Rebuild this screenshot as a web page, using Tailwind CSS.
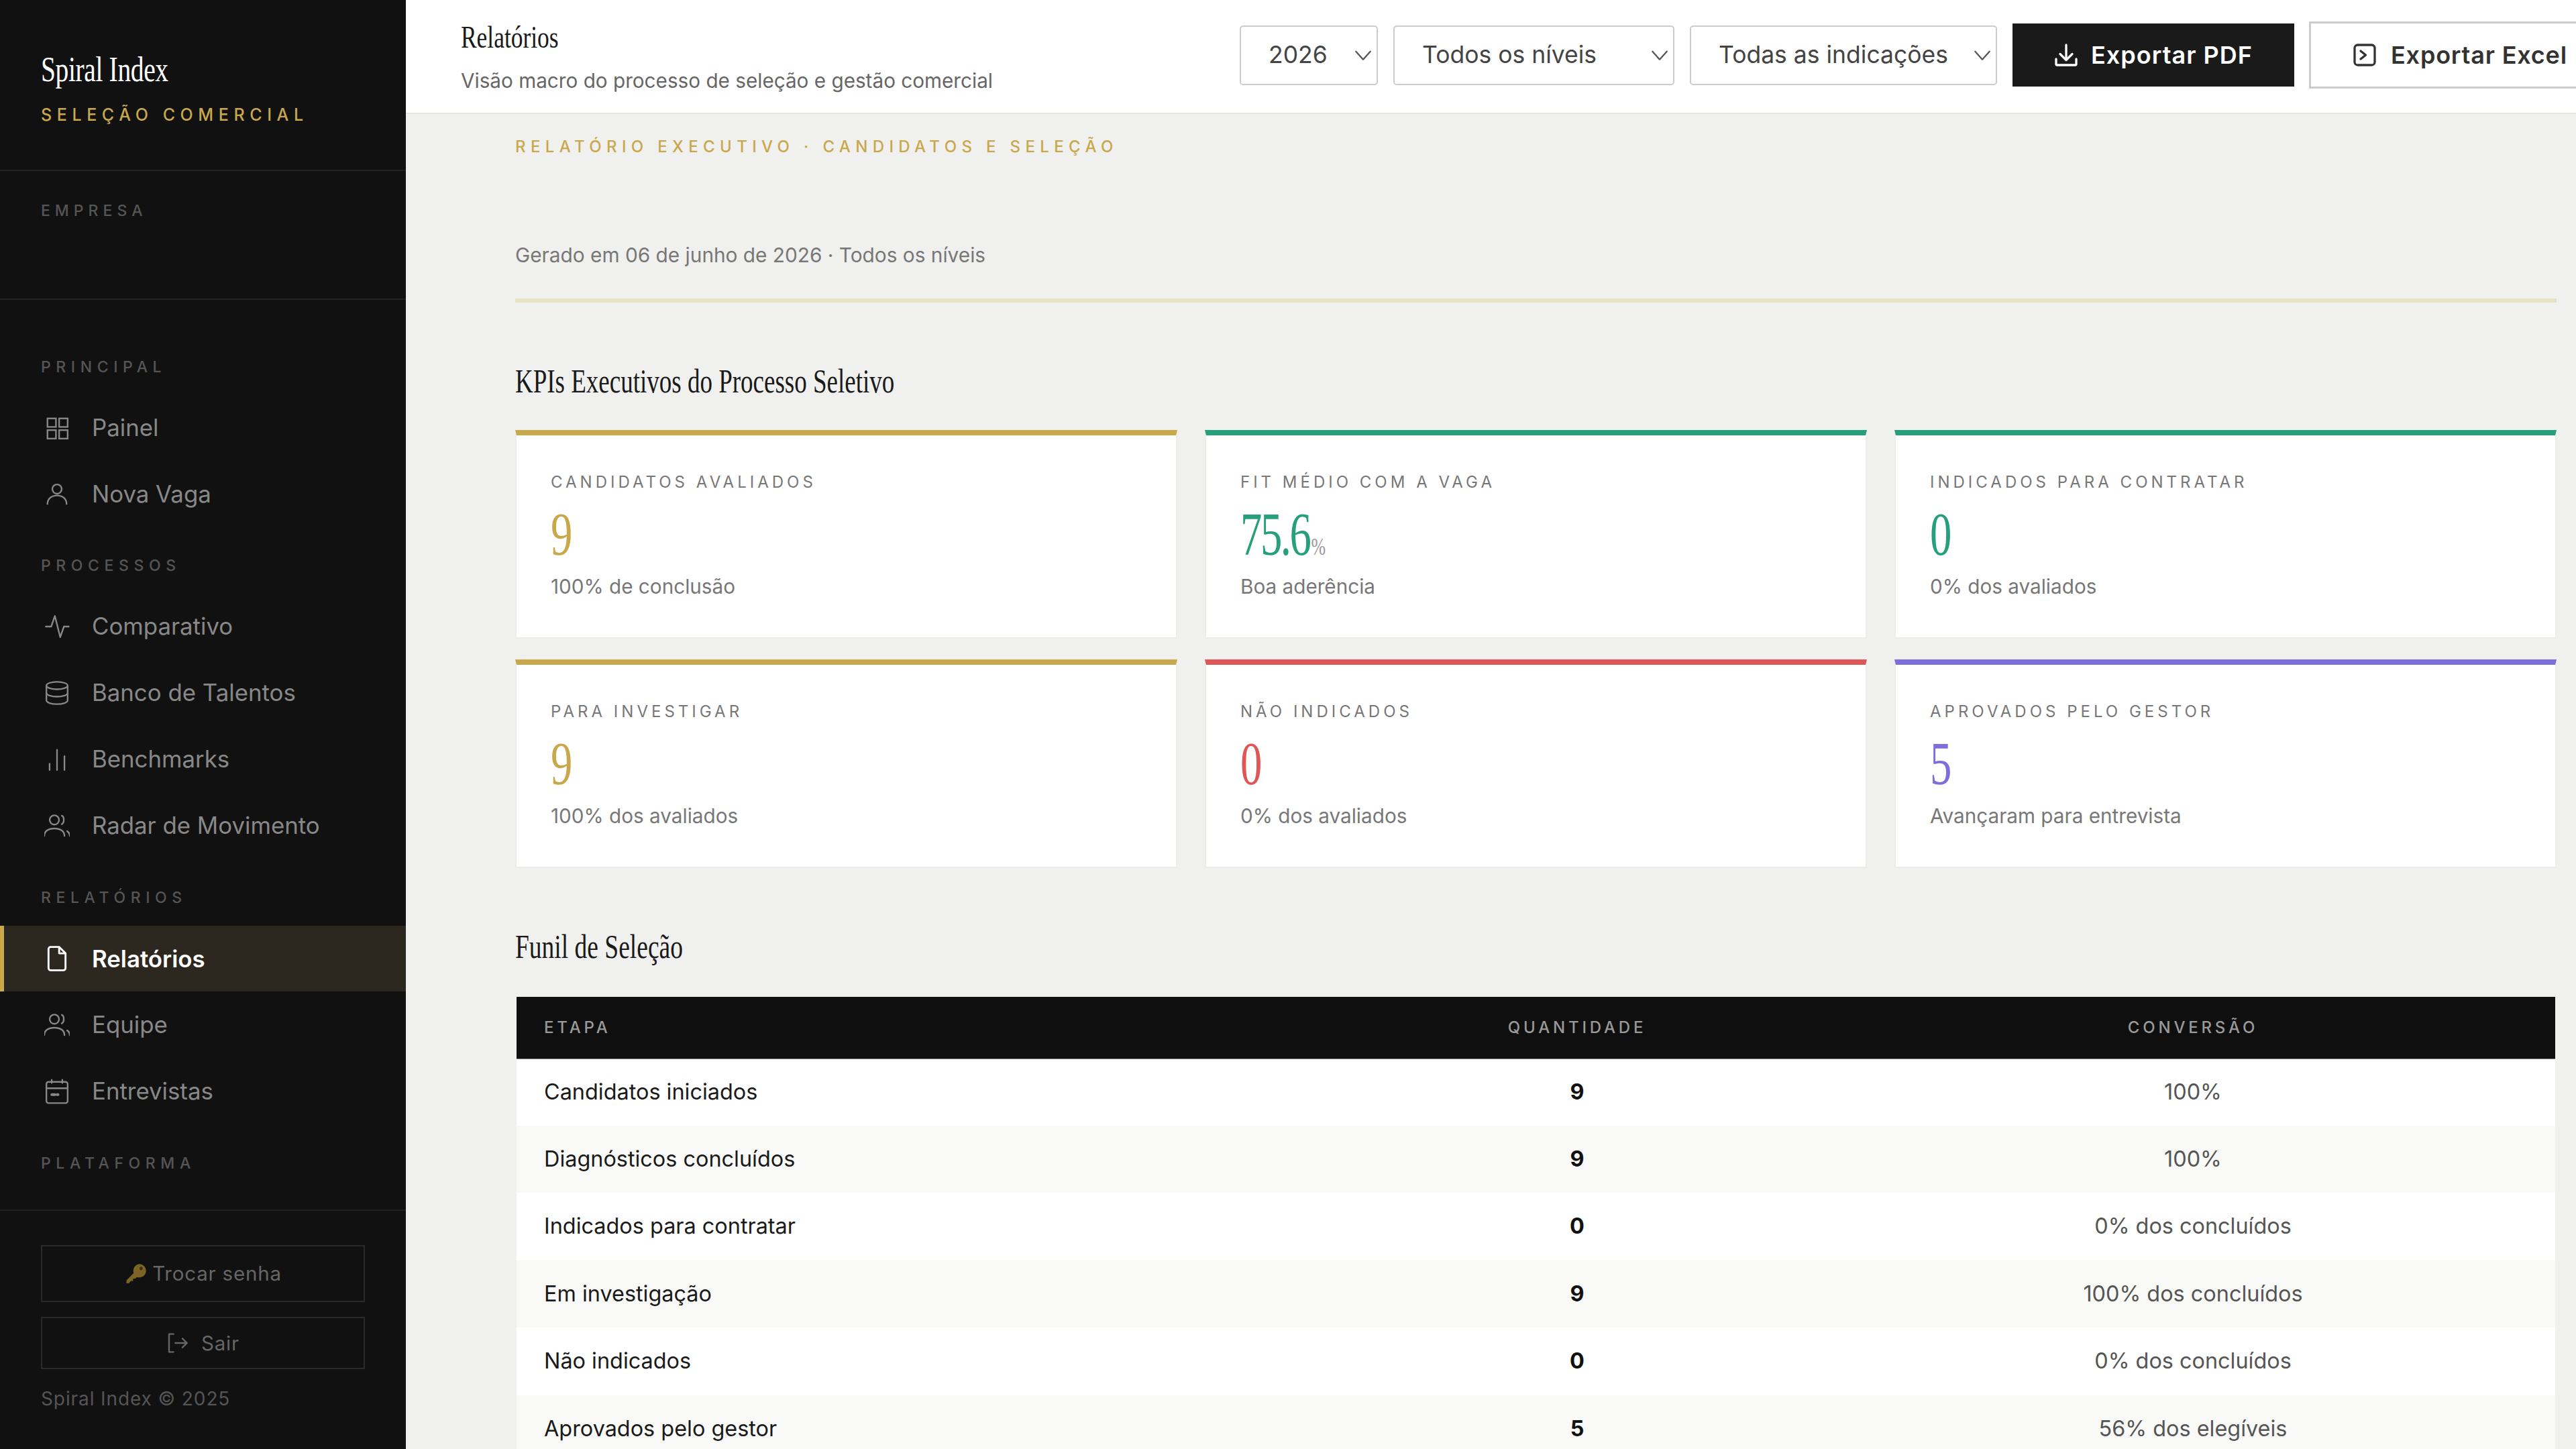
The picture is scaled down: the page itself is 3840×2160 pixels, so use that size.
<!DOCTYPE html>
<html lang="pt-BR">
<head>
<meta charset="UTF-8">
<title>Spiral Index - Relatórios</title>
<script src="https://cdn.jsdelivr.net/npm/@tailwindcss/browser@4"></script>
</head>
<body class="h-[2160px] w-[3840px] overflow-hidden bg-[#f0f0ee] font-['Inter','Liberation_Sans',sans-serif]">
<div class="flex h-full w-full">

  <!-- Sidebar -->
  <aside class="flex h-full w-[605px] shrink-0 flex-col bg-[#111111]">
    <div class="h-[255px] border-b-2 border-[#222222] pl-[61px] pt-[74px]">
      <div class="origin-left scale-x-[.76] whitespace-nowrap font-['Liberation_Serif',serif] text-[52px] leading-[60px] tracking-[-0.5px] text-white">Spiral Index</div>
      <div class="mt-[22px] whitespace-nowrap text-[25px] font-medium leading-[30px] tracking-[7.600px] text-[#c9a84c]">SELEÇÃO COMERCIAL</div>
    </div>
    <div class="h-[192px] border-b-2 border-[#222222] pl-[61px] pt-[44px] text-[23px] font-medium leading-[30px] tracking-[7px] text-[#555555]">EMPRESA</div>

    <nav class="flex-1 pt-[85px]">
      <div class="pl-[61px] text-[23px] font-medium leading-[30px] tracking-[7.600px] text-[#555555]">PRINCIPAL</div>
      <a class="mt-[26px] flex h-[99px] items-center gap-[33px] pl-[66px] text-[34.800px] text-[#888888]">
        <svg class="h-[38px] w-[38px]" viewBox="0 0 24 24" fill="none" stroke="currentColor" stroke-width="1.5"><rect x="3" y="3" width="8" height="8"/><rect x="14" y="3" width="8" height="8"/><rect x="3" y="14" width="8" height="8"/><rect x="14" y="14" width="8" height="8"/></svg>
        Painel
      </a>
      <a class="flex h-[99px] items-center gap-[33px] pl-[66px] text-[34.800px] text-[#888888]">
        <svg class="h-[38px] w-[38px]" viewBox="0 0 24 24" fill="none" stroke="currentColor" stroke-width="1.5" stroke-linecap="round"><circle cx="12" cy="7" r="4.400"/><path d="M3 21c0-5 4-8 9-8s9 3 9 8"/></svg>
        Nova Vaga
      </a>
      <div class="mt-[42px] pl-[61px] text-[23px] font-medium leading-[30px] tracking-[7.600px] text-[#555555]">PROCESSOS</div>
      <a class="mt-[26px] flex h-[99px] items-center gap-[33px] pl-[66px] text-[34.800px] text-[#888888]">
        <svg class="h-[38px] w-[38px]" viewBox="0 0 24 24" fill="none" stroke="currentColor" stroke-width="1.5" stroke-linecap="round" stroke-linejoin="round"><path d="M1.5 12h5l3.500-10 5 20 3.500-10h4.500"/></svg>
        Comparativo
      </a>
      <a class="flex h-[99px] items-center gap-[33px] pl-[66px] text-[34.800px] text-[#888888]">
        <svg class="h-[38px] w-[38px]" viewBox="0 0 24 24" fill="none" stroke="currentColor" stroke-width="1.5"><ellipse cx="12" cy="5" rx="10" ry="3.500"/><path d="M2 5v14c0 2 4.500 3.500 10 3.500s10-1.500 10-3.500V5"/><path d="M2 12c0 2 4.500 3.500 10 3.500s10-1.500 10-3.500"/></svg>
        Banco de Talentos
      </a>
      <a class="flex h-[99px] items-center gap-[33px] pl-[66px] text-[34.800px] text-[#888888]">
        <svg class="h-[38px] w-[38px]" viewBox="0 0 24 24" fill="none" stroke="currentColor" stroke-width="1.5" stroke-linecap="round"><path d="M5 22v-6M12 22V3M19 22V9"/></svg>
        Benchmarks
      </a>
      <a class="flex h-[99px] items-center gap-[33px] pl-[66px] text-[34.800px] text-[#888888]">
        <svg class="h-[38px] w-[38px]" viewBox="0 0 24 24" fill="none" stroke="currentColor" stroke-width="1.5" stroke-linecap="round"><circle cx="9.500" cy="6.500" r="4.400"/><path d="M0 21.500c0-4.500 4-7 9.500-7s9.500 2.500 9.500 7"/><path d="M16.500 2.500c2.500 1 2.500 6.500 0 8M21.500 17c1.500 1 2.500 2.500 2.500 4.500"/></svg>
        Radar de Movimento
      </a>
      <div class="mt-[43px] pl-[61px] text-[23px] font-medium leading-[30px] tracking-[7.600px] text-[#555555]">RELATÓRIOS</div>
      <a class="mt-[27px] flex h-[98px] items-center gap-[33px] border-l-[6px] border-[#c9a84c] bg-[#2c2820] pl-[60px] text-[34.800px] font-semibold text-white">
        <svg class="h-[38px] w-[38px]" viewBox="0 0 24 24" fill="none" stroke="currentColor" stroke-width="1.8" stroke-linejoin="round"><path d="M4 3a2 2 0 0 1 2-2h8l6 6v14a2 2 0 0 1-2 2H6a2 2 0 0 1-2-2z"/><path d="M14 1v6h6"/></svg>
        Relatórios
      </a>
      <a class="flex h-[99px] items-center gap-[33px] pl-[66px] text-[34.800px] text-[#888888]">
        <svg class="h-[38px] w-[38px]" viewBox="0 0 24 24" fill="none" stroke="currentColor" stroke-width="1.5" stroke-linecap="round"><circle cx="9.500" cy="6.500" r="4.400"/><path d="M0 21.500c0-4.500 4-7 9.500-7s9.500 2.500 9.500 7"/><path d="M16.500 2.500c2.500 1 2.500 6.500 0 8M21.500 17c1.500 1 2.500 2.500 2.500 4.500"/></svg>
        Equipe
      </a>
      <a class="flex h-[99px] items-center gap-[33px] pl-[66px] text-[34.800px] text-[#888888]">
        <svg class="h-[38px] w-[38px]" viewBox="0 0 24 24" fill="none" stroke="currentColor" stroke-width="1.5" stroke-linecap="round"><rect x="2" y="3" width="20" height="20" rx="2"/><path d="M2 9h20M7 1v3M17 1v3"/><path d="M7 15h3M12 15h1" stroke-width="2.400"/></svg>
        Entrevistas
      </a>
      <div class="mt-[43px] pl-[61px] text-[23px] font-medium leading-[30px] tracking-[7.600px] text-[#555555]">PLATAFORMA</div>
    </nav>

    <div class="h-[357px] border-t-2 border-[#222222] px-[61px] pt-[51px]">
      <button class="flex h-[85px] w-full items-center justify-center gap-[8px] border-2 border-[#2a2a2a] pl-[2px] text-[29.500px] tracking-[0.800px] text-[#666666]">
        <svg class="h-[32px] w-[32px]" viewBox="0 0 24 24" fill="#7c6425"><path d="M15.500 1a7.500 7.500 0 1 1-2.700 14.500L11 17.300h-2.500v2.500H6L3.800 22.500 1 22.500l.2-3.300 8-8.200A7.500 7.500 0 0 1 15.500 1z"/><circle cx="17.500" cy="6" r="1.800" fill="#3a3010"/></svg>
        Trocar senha
      </button>
      <button class="mt-[22px] flex h-[78px] w-full items-center justify-center gap-[20px] border-2 border-[#2a2a2a] text-[29.500px] tracking-[0.800px] text-[#666666]">
        <svg class="h-[32px] w-[32px]" viewBox="0 0 24 24" fill="none" stroke="currentColor" stroke-width="1.800" stroke-linecap="round" stroke-linejoin="round"><path d="M8 2H3v20h5"/><path d="M10 12h13M18 7l5 5-5 5"/></svg>
        Sair
      </button>
      <div class="mt-[28px] text-[28px] leading-[32px] tracking-[0.900px] text-[#555555]">Spiral Index © 2025</div>
    </div>
  </aside>

  <div class="flex min-w-0 flex-1 flex-col">
    <!-- Header -->
    <header class="flex h-[170px] shrink-0 items-center border-b-2 border-[#e5e5e3] bg-white pl-[82px]">
      <div class="w-[1161px] shrink-0">
        <div class="origin-left scale-x-[.77] whitespace-nowrap font-['Liberation_Serif',serif] text-[46px] leading-[54px] text-[#1a1a1a]">Relatórios</div>
        <div class="mt-[17px] whitespace-nowrap text-[29.700px] leading-[40px] text-[#666666]">Visão macro do processo de seleção e gestão comercial</div>
      </div>
      <div class="mb-[4px] flex w-max shrink-0 items-center">
        <div class="relative flex h-[89px] w-[206px] items-center rounded-[5px] border-2 border-[#cccccc] pl-[41px] text-[35.500px] text-[#444444]">2026
          <svg class="absolute right-[4px] top-[26px] h-[32px] w-[32px]" viewBox="0 0 24 24" fill="none" stroke="#555555" stroke-width="1.700" stroke-linecap="round" stroke-linejoin="round"><path d="M4 8l8 9 8-9"/></svg>
        </div>
        <div class="relative ml-[23px] flex h-[89px] w-[419px] items-center rounded-[5px] border-2 border-[#cccccc] pl-[41px] text-[35.500px] text-[#444444]">Todos os níveis
          <svg class="absolute right-[4px] top-[26px] h-[32px] w-[32px]" viewBox="0 0 24 24" fill="none" stroke="#555555" stroke-width="1.700" stroke-linecap="round" stroke-linejoin="round"><path d="M4 8l8 9 8-9"/></svg>
        </div>
        <div class="relative ml-[23px] flex h-[89px] w-[458px] items-center rounded-[5px] border-2 border-[#cccccc] pl-[41px] text-[35.500px] text-[#444444]">Todas as indicações
          <svg class="absolute right-[4px] top-[26px] h-[32px] w-[32px]" viewBox="0 0 24 24" fill="none" stroke="#555555" stroke-width="1.700" stroke-linecap="round" stroke-linejoin="round"><path d="M4 8l8 9 8-9"/></svg>
        </div>
        <button class="ml-[23px] flex h-[94px] w-[420px] items-center justify-center gap-[19px] bg-[#1a1a1a] text-[36px] font-semibold tracking-[1px] text-white">
          <svg class="h-[36px] w-[36px]" viewBox="0 0 24 24" fill="none" stroke="currentColor" stroke-width="2.200" stroke-linecap="round" stroke-linejoin="round"><path d="M12 2v14M6 11l6 6 6-6"/><path d="M2 16v5a1 1 0 0 0 1 1h18a1 1 0 0 0 1-1v-5"/></svg>
          Exportar PDF
        </button>
        <button class="ml-[22px] flex h-[100px] w-[420px] items-center gap-[21px] border-[3px] border-[#cccccc] bg-white pl-[62px] text-[36px] font-semibold tracking-[0.800px] text-[#333333]">
          <svg class="h-[36px] w-[36px]" viewBox="0 0 24 24" fill="none" stroke="currentColor" stroke-width="2.200" stroke-linecap="round" stroke-linejoin="round"><rect x="2" y="2" width="20" height="20" rx="3"/><path d="M8 8l5 4-5 4"/></svg>
          Exportar Excel
        </button>
      </div>
    </header>

    <!-- Report -->
    <main class="min-h-0 flex-1 overflow-hidden pl-[163px] pr-[29px]">
      <div class="mt-[33px] whitespace-nowrap text-[24px] font-medium leading-[32px] tracking-[7.350px] text-[#c9a84c]">RELATÓRIO EXECUTIVO · CANDIDATOS E SELEÇÃO</div>
      <div class="mt-[125px] text-[29.800px] leading-[40px] text-[#777777]">Gerado em 06 de junho de 2026 · Todos os níveis</div>
      <div class="mt-[45px] h-[6px] bg-[#e8e0c4]"></div>

      <h2 class="mt-[88px] origin-left scale-x-[.74] whitespace-nowrap font-['Liberation_Serif',serif] text-[50px] font-normal leading-[58px] text-[#1a1a1a]">KPIs Executivos do Processo Seletivo</h2>

      <div class="mt-[44px] grid grid-cols-3 gap-x-[41px] gap-y-[31px]">
        <div class="h-[311px] border-x-[2px] border-b-[2px] border-t-[8px] border-x-[#ecece9] border-b-[#ecece9] border-t-[#c9a84c] bg-white pl-[51px] pt-[55px]">
          <div class="text-[24px] leading-[30px] tracking-[5px] text-[#777777]">CANDIDATOS AVALIADOS</div>
          <div class="mt-[22px] h-[82px] origin-left scale-x-[.72] font-['Liberation_Serif',serif] text-[90px] leading-[82px] text-[#c9a84c]">9</div>
          <div class="mt-[16px] text-[29.700px] leading-[40px] text-[#777777]">100% de conclusão</div>
        </div>
        <div class="h-[311px] border-x-[2px] border-b-[2px] border-t-[8px] border-x-[#ecece9] border-b-[#ecece9] border-t-[#25a07a] bg-white pl-[51px] pt-[55px]">
          <div class="text-[24px] leading-[30px] tracking-[5px] text-[#777777]">FIT MÉDIO COM A VAGA</div>
          <div class="mt-[22px] h-[82px] origin-left scale-x-[.72] whitespace-nowrap font-['Liberation_Serif',serif] text-[90px] leading-[82px] tracking-[-3.500px] text-[#25a07a]">75.6<span class="ml-[3px] text-[36px] tracking-normal text-[#999999]">%</span></div>
          <div class="mt-[16px] text-[29.700px] leading-[40px] text-[#777777]">Boa aderência</div>
        </div>
        <div class="h-[311px] border-x-[2px] border-b-[2px] border-t-[8px] border-x-[#ecece9] border-b-[#ecece9] border-t-[#25a07a] bg-white pl-[51px] pt-[55px]">
          <div class="text-[24px] leading-[30px] tracking-[5px] text-[#777777]">INDICADOS PARA CONTRATAR</div>
          <div class="mt-[22px] h-[82px] origin-left scale-x-[.72] font-['Liberation_Serif',serif] text-[90px] leading-[82px] text-[#25a07a]">0</div>
          <div class="mt-[16px] text-[29.700px] leading-[40px] text-[#777777]">0% dos avaliados</div>
        </div>
        <div class="h-[311px] border-x-[2px] border-b-[2px] border-t-[8px] border-x-[#ecece9] border-b-[#ecece9] border-t-[#c9a84c] bg-white pl-[51px] pt-[55px]">
          <div class="text-[24px] leading-[30px] tracking-[5px] text-[#777777]">PARA INVESTIGAR</div>
          <div class="mt-[22px] h-[82px] origin-left scale-x-[.72] font-['Liberation_Serif',serif] text-[90px] leading-[82px] text-[#c9a84c]">9</div>
          <div class="mt-[16px] text-[29.700px] leading-[40px] text-[#777777]">100% dos avaliados</div>
        </div>
        <div class="h-[311px] border-x-[2px] border-b-[2px] border-t-[8px] border-x-[#ecece9] border-b-[#ecece9] border-t-[#e05555] bg-white pl-[51px] pt-[55px]">
          <div class="text-[24px] leading-[30px] tracking-[5px] text-[#777777]">NÃO INDICADOS</div>
          <div class="mt-[22px] h-[82px] origin-left scale-x-[.72] font-['Liberation_Serif',serif] text-[90px] leading-[82px] text-[#e05555]">0</div>
          <div class="mt-[16px] text-[29.700px] leading-[40px] text-[#777777]">0% dos avaliados</div>
        </div>
        <div class="h-[311px] border-x-[2px] border-b-[2px] border-t-[8px] border-x-[#ecece9] border-b-[#ecece9] border-t-[#7c6fdc] bg-white pl-[51px] pt-[55px]">
          <div class="text-[24px] leading-[30px] tracking-[5px] text-[#777777]">APROVADOS PELO GESTOR</div>
          <div class="mt-[22px] h-[82px] origin-left scale-x-[.72] font-['Liberation_Serif',serif] text-[90px] leading-[82px] text-[#7c6fdc]">5</div>
          <div class="mt-[16px] text-[29.700px] leading-[40px] text-[#777777]">Avançaram para entrevista</div>
        </div>
      </div>

      <h2 class="mt-[88px] origin-left scale-x-[.75] whitespace-nowrap font-['Liberation_Serif',serif] text-[50px] font-normal leading-[58px] text-[#1a1a1a]">Funil de Seleção</h2>

      <table class="ml-[2px] mt-[46px] w-[3039px] table-fixed border-collapse text-[32.400px] text-[#1a1a1a]">
        <colgroup><col class="w-[1203px]"><col class="w-[756px]"><col></colgroup>
        <thead>
          <tr class="h-[92px] border-b border-[#888888] bg-[#0f0f0f] text-[24px] leading-[30px] tracking-[4.800px] text-[#999999]">
            <th class="pl-[41px] text-left font-medium">ETAPA</th>
            <th class="text-center font-medium">QUANTIDADE</th>
            <th class="text-center font-medium">CONVERSÃO</th>
          </tr>
        </thead>
        <tbody>
          <tr class="h-[100px] bg-white"><td class="pl-[41px]">Candidatos iniciados</td><td class="text-center font-bold text-[#111111]">9</td><td class="text-center text-[#555555]">100%</td></tr>
          <tr class="h-[100px] bg-[#f9f9f8]"><td class="pl-[41px]">Diagnósticos concluídos</td><td class="text-center font-bold text-[#111111]">9</td><td class="text-center text-[#555555]">100%</td></tr>
          <tr class="h-[101px] bg-white"><td class="pl-[41px]">Indicados para contratar</td><td class="text-center font-bold text-[#111111]">0</td><td class="text-center text-[#555555]">0% dos concluídos</td></tr>
          <tr class="h-[100px] bg-[#f9f9f8]"><td class="pl-[41px]">Em investigação</td><td class="text-center font-bold text-[#111111]">9</td><td class="text-center text-[#555555]">100% dos concluídos</td></tr>
          <tr class="h-[101px] bg-white"><td class="pl-[41px]">Não indicados</td><td class="text-center font-bold text-[#111111]">0</td><td class="text-center text-[#555555]">0% dos concluídos</td></tr>
          <tr class="h-[100px] bg-[#f9f9f8]"><td class="pl-[41px]">Aprovados pelo gestor</td><td class="text-center font-bold text-[#111111]">5</td><td class="text-center text-[#555555]">56% dos elegíveis</td></tr>
        </tbody>
      </table>
    </main>
  </div>
</div>
</body>
</html>
